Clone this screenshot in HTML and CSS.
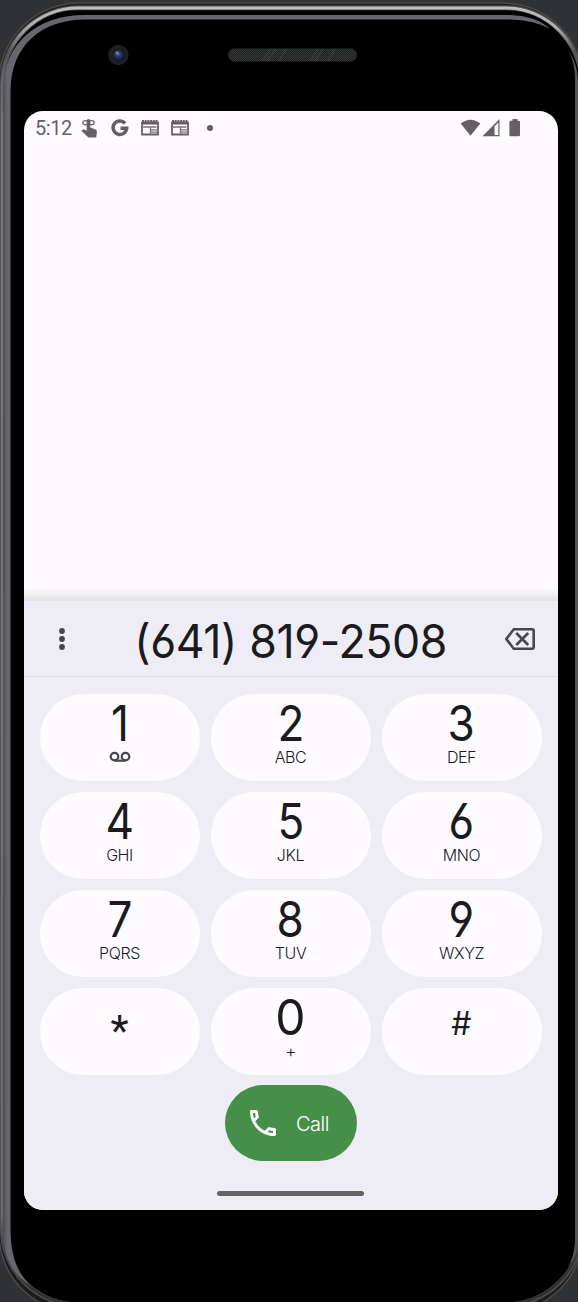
FILE: index.html
```html
<!DOCTYPE html>
<html lang="en">
<head>
<meta charset="utf-8">
<title>Phone</title>
<link rel="stylesheet" href="styles.css">
</head>
<body>
<div class="device">
  <svg class="frame" viewBox="0 0 578 1302" width="578" height="1302" aria-hidden="true">
    <defs>
      <linearGradient id="rim" x1="0" y1="0" x2="0" y2="1302" gradientUnits="userSpaceOnUse">
        <stop offset="0" stop-color="#c4c4c6"/><stop offset=".02" stop-color="#b0b0b2"/><stop offset=".04" stop-color="#555557"/><stop offset=".1" stop-color="#79797c"/><stop offset=".93" stop-color="#6c6c6e"/><stop offset=".97" stop-color="#333334"/><stop offset="1" stop-color="#303031"/>
      </linearGradient>
      <linearGradient id="side" x1="3" y1="0" x2="11" y2="0" gradientUnits="userSpaceOnUse">
        <stop offset="0" stop-color="#4c4c50"/><stop offset=".5" stop-color="#66676c"/><stop offset="1" stop-color="#66666c"/>
      </linearGradient>
      <pattern id="mesh" width="2" height="2" patternUnits="userSpaceOnUse"><rect width="2" height="2" fill="#1d1e1e"/><rect width="1" height="1" fill="#3c3e3e"/><rect x="1" y="1" width="1" height="1" fill="#333535"/></pattern>
      <radialGradient id="lens" cx=".45" cy=".4" r=".6"><stop offset="0" stop-color="#7084b8"/><stop offset=".35" stop-color="#2c3d70"/><stop offset="1" stop-color="#131a36"/></radialGradient>
    </defs>
    <rect width="578" height="1302" fill="#303133"/>
    <rect x="-1" y="3" width="584" height="1310" rx="80" fill="#1b1b1c" stroke="#4a4a4b" stroke-width="1.5"/>
    <rect x="2.5" y="7.8" width="579" height="1297" rx="76" fill="#000" stroke="#4d4d4e" stroke-width="5"/>
    <rect x="2.3" y="8" width="579" height="1296" rx="76" fill="none" stroke="url(#rim)" stroke-width="3"/>
    <rect x="4.5" y="11.5" width="575" height="1290" rx="73" fill="#000"/>
    <path d="M3 1230V92C3 42 38 15 85 15V19.500C42 19.500 10.500 45 10.500 92V1228C10.500 1257 18 1274 31 1285.500C13 1276 3 1257 3 1230Z" fill="url(#side)"/>
    <path d="M85 15H510Q537 16 550 29Q535 20 510 19.500H85Z" fill="#67676d"/>
    <path d="M568 50Q575 61 575 80V1242Q574 1257 568 1267Q577 1258 578 1242V80Q577 62 568 50Z" fill="#56565a"/>
    <rect x="228" y="48.500" width="129" height="13" rx="6.500" fill="url(#mesh)" stroke="#171818"/>
    <path d="M262 61l9-12m-4 12l9-12m3 12l7-12m24 12l8-12m-3 12l8-12m5 12l7-12" stroke="#484b4a" stroke-opacity=".4" stroke-width="2" fill="none"/>
    <circle cx="118.300" cy="55" r="10.200" fill="#202023"/>
    <circle cx="118.500" cy="55" r="6.200" fill="#15171e"/>
    <circle cx="118.500" cy="55" r="5.300" fill="url(#lens)"/>
    <circle cx="116.800" cy="52.700" r="1" fill="#8b9cc0"/>
  </svg>

  <main class="screen">
    <header class="status">
      <span class="clock">5:12</span>
      <svg class="tap" viewBox="0 0 18 20" width="18" height="20"><path d="M5.700 6V2.300Q7.500 -.3 9.300 2.300V9.500L14.600 11.600Q16.200 12.300 15.900 14L15.200 19.500H7.500L.5 13L2 11.300L5.700 12.500Z" fill="#646166"/><ellipse cx="4.600" cy="4.800" rx="2.800" ry="2.100" fill="none" stroke="#646166" stroke-width="1.300"/><ellipse cx="10.400" cy="4.800" rx="2.800" ry="2.100" fill="none" stroke="#646166" stroke-width="1.300"/></svg>
      <svg class="google" viewBox="0 0 18 18" width="18" height="18"><path d="M14.100 4.300A6.800 6.800 0 1 0 15.700 9.200H9.500" fill="none" stroke="#646166" stroke-width="3.500"/></svg>
      <svg class="news" viewBox="0 0 18 16" width="18" height="16"><path d="M1 2.500h16v12H1z" fill="none" stroke="#646166" stroke-width="1.800"/><path d="M1 1h16" stroke="#646166" stroke-width="2" stroke-dasharray="2 .7"/><path d="M1 3.400h16" stroke="#646166" stroke-width="2"/><path d="M2 7h13.500M9.500 9.800H17M9.500 12.200H17M9.500 7v7" stroke="#77757a" stroke-width="1.300"/></svg>
      <svg class="news" viewBox="0 0 18 16" width="18" height="16"><path d="M1 2.500h16v12H1z" fill="none" stroke="#646166" stroke-width="1.800"/><path d="M1 1h16" stroke="#646166" stroke-width="2" stroke-dasharray="2 .7"/><path d="M1 3.400h16" stroke="#646166" stroke-width="2"/><path d="M2 7h13.500M9.500 9.800H17M9.500 12.200H17M9.500 7v7" stroke="#77757a" stroke-width="1.300"/></svg>
      <i class="more"></i>
      <svg class="signals" viewBox="0 0 62 18" width="62" height="18"><path d="M.7 4.500Q10.500-3.200 20.300 4.500L10.500 16.800Z" fill="#646166"/><path d="M22.500 17.200L39.500 0V17.200Z" fill="#646166"/><path d="M34.500 7.500L38.300 3.500V15.900H34.500Z" fill="#fdfbff"/><path d="M52.500 0h5v1.800h1.200q1.300 0 1.300 1.300V16q0 1.300-1.300 1.300H50.700q-1.300 0-1.300-1.300V3.100q0-1.300 1.300-1.300H52.500Z" fill="#646166"/></svg>
    </header>
    <div class="blank"></div>
    <section class="dialer">
      <div class="entry">
        <svg class="menu" viewBox="0 0 8 24" width="8" height="24"><g fill="#46464f"><circle cx="4" cy="4" r="2.900"/><circle cx="4" cy="12" r="2.900"/><circle cx="4" cy="20" r="2.900"/></g></svg>
        <div class="number"><span>(641) 819-2508</span></div>
        <svg class="erase" viewBox="0 0 32 24" width="32" height="24"><path d="M9.800 2.200H28Q29.700 2.200 29.700 3.900V20.100Q29.700 21.800 28 21.800H9.800L2.300 12Z" fill="none" stroke="#46464f" stroke-width="2.600" stroke-linejoin="round"/><path d="M12.200 6L24.200 18M24.200 6L12.200 18" stroke="#46464f" stroke-width="2.600"/></svg>
      </div>
      <div class="keys">
        <div class="key"><b>1</b><svg class="voicemail" viewBox="0 0 22 12" width="22" height="12"><g fill="none" stroke="#46464f" stroke-width="2.200"><circle cx="5.500" cy="5.600" r="3.800"/><circle cx="16.500" cy="5.600" r="3.800"/><path d="M5.500 9.700h11"/></g></svg></div>
        <div class="key"><b>2</b><small>ABC</small></div>
        <div class="key"><b>3</b><small>DEF</small></div>
        <div class="key"><b>4</b><small>GHI</small></div>
        <div class="key"><b>5</b><small>JKL</small></div>
        <div class="key"><b>6</b><small>MNO</small></div>
        <div class="key"><b>7</b><small>PQRS</small></div>
        <div class="key"><b>8</b><small>TUV</small></div>
        <div class="key"><b>9</b><small>WXYZ</small></div>
        <div class="key star"><b>*</b></div>
        <div class="key"><b class="zero">0</b><small class="plus">+</small></div>
        <div class="key hash"><b>#</b></div>
      </div>
      <div class="call">
        <svg viewBox="3 3 18 18" width="26" height="26"><path d="M6.540 5c.06.89.21 1.760.45 2.590l-1.200 1.200c-.41-1.200-.67-2.470-.76-3.790h1.510m9.860 12.020c.85.24 1.720.39 2.600.45v1.490c-1.320-.09-2.590-.35-3.800-.75l1.200-1.190M7.500 3H4c-.55 0-1 .45-1 1 0 9.390 7.610 17 17 17 .55 0 1-.45 1-1v-3.490c0-.55-.45-1-1-1-1.240 0-2.450-.2-3.570-.57-.1-.04-.21-.05-.31-.05-.26 0-.51.1-.71.29l-2.200 2.200c-2.830-1.450-5.150-3.760-6.590-6.590l2.200-2.200c.28-.28.36-.67.25-1.020C8.700 6.450 8.500 5.250 8.500 4c0-.55-.45-1-1-1z" fill="#fff"/></svg>
        <span>Call</span>
      </div>
      <div class="home"></div>
    </section>
  </main>
</div>
</body>
</html>
```
FILE: styles.css
```css
body { margin: 0; background: #303133; }
.device { position: relative; box-sizing: border-box; width: 578px; height: 1302px; padding: 111px 20px 92px 24px; overflow: hidden; }
.frame { position: absolute; inset: 0; }
.screen { position: relative; display: flex; flex-direction: column; height: 1099px; width: 534px; border-radius: 19px; overflow: hidden; background: #fdfbff; color: #1b1b1f; font-family: Inter, sans-serif; }
.screen svg { display: block; flex: none; }
.status { display: flex; align-items: center; height: 34px; padding-left: 11px; }
.clock { width: 46px; font: 400 20px/34px Roboto, sans-serif; color: #646166; letter-spacing: -.4px; }
.tap { margin-right: 12px; }
.google { margin-right: 12px; }
.news { margin-right: 12px; }
.more { width: 6px; height: 6px; margin-left: 6px; border-radius: 50%; background: #646166; }
.signals { margin-left: auto; margin-right: 36px; }
.blank { height: 456px; background: linear-gradient(#fdfbff 443px, #e3e2e5 456px); }
.dialer { flex: 1; background: #eeedf6; display: flex; flex-direction: column; align-items: center; }
.entry { box-sizing: border-box; width: 100%; height: 76px; border-bottom: 1px solid #dfdee7; display: flex; align-items: center; padding: 0 22px 0 34px; }
.number { flex: 1; text-align: center; font-size: 47px; line-height: 75px; white-space: nowrap; font-feature-settings: "cv03", "cv04"; letter-spacing: -.4px; padding: 4px 0 0 11px; }
.number span { display: inline-block; transform: scaleX(.95); }
.keys { display: grid; grid-template-columns: repeat(3, 160px); grid-auto-rows: 87px; gap: 11px; padding: 17px 1px 0 0; }
.key { border-radius: 44px; background: #fdfbff; display: flex; flex-direction: column; align-items: center; }
.key b { height: 55px; font-size: 49px; line-height: 59px; font-weight: 400; font-feature-settings: "cv03", "cv04"; transform: scaleX(.9); }
.key small { font-size: 16px; line-height: 16px; font-weight: 350; letter-spacing: -.4px; }
.voicemail { margin-top: 2px; }
.key .zero { transform: scaleX(.98); }
.key .plus { font-size: 17px; }
.key.star b { font-family: Roboto, sans-serif; font-size: 42px; line-height: 85px; transform: none; }
.key.hash b { font-size: 32px; line-height: 71px; transform: none; }
.call { box-sizing: border-box; display: flex; align-items: center; gap: 20px; width: 132px; height: 76px; margin-top: 10px; padding-left: 25px; border-radius: 38px; background: #468f49; color: #fff; font-size: 20px; }
.call span { font-weight: 350; letter-spacing: -.5px; padding-top: 2px; }
.home { width: 147px; height: 5px; margin: 30px 1px 0 0; border-radius: 3px; background: #646467; }
```
